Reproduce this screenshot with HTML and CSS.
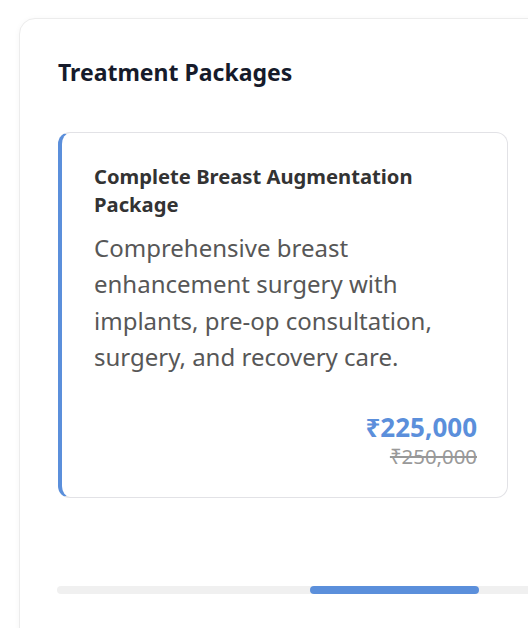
FILE: index.html
```html
<!DOCTYPE html>
<html lang="en">
<head>
<meta charset="utf-8">
<title>Treatment Packages</title>
<link rel="stylesheet" href="styles.css">
</head>
<body>
<section class="panel">
  <h2 class="panel-title">Treatment Packages</h2>
  <div class="carousel">
    <article class="package">
      <h3 class="package-title">Complete Breast Augmentation Package</h3>
      <p class="package-desc">Comprehensive breast enhancement surgery with implants, pre-op consultation, surgery, and recovery care.</p>
      <div class="package-price">
        <span class="price-now">₹225,000</span>
        <span class="price-old">₹250,000</span>
      </div>
    </article>
  </div>
  <div class="track"><div class="thumb"></div></div>
</section>
</body>
</html>
```
FILE: styles.css
```css
html, body {
  margin: 0;
  padding: 0;
  background: #ffffff;
  overflow: hidden;
  font-family: "Noto Sans", "Open Sans", sans-serif;
}
body {
  width: 528px;
  height: 628px;
}
.panel {
  box-sizing: border-box;
  margin: 18px 0 0 19px;
  width: 600px;
  height: 640px;
  padding: 37px 38px 0 38px;
  border: 1px solid #ececec;
  border-radius: 16px;
  background: #ffffff;
  box-shadow: 0 1px 6px rgba(0, 0, 0, 0.04);
}
.panel-title {
  margin: 0;
  font-size: 23px;
  line-height: 32px;
  font-weight: 700;
  color: #161b2b;
}
.carousel {
  display: flex;
  margin-top: 44px;
}
.package {
  box-sizing: border-box;
  width: 450px;
  flex: none;
  padding: 29px 30px 28px 32px;
  border: 1px solid #e2e2e6;
  border-left: 4px solid #5b8fdb;
  border-radius: 12px;
  background: #fff;
}
.package-title {
  margin: 0;
  font-size: 20.2px;
  line-height: 28px;
  font-weight: 700;
  color: #333333;
}
.package-desc {
  margin: 12px 0 0 0;
  font-size: 24px;
  line-height: 36.4px;
  color: #575757;
}
.package-price {
  display: flex;
  flex-direction: column;
  align-items: flex-end;
  margin-top: 35px;
}
.price-now {
  font-size: 26px;
  line-height: 32px;
  font-weight: 700;
  color: #5b8fdb;
}
.price-old {
  font-size: 20.4px;
  line-height: 26px;
  color: #999999;
  text-decoration: line-through;
}
.track {
  position: relative;
  margin-top: 88px;
  height: 8px;
  border-radius: 4px;
  background: #f0f0f0;
  margin-left: -1px;
}
.thumb {
  position: absolute;
  left: 253px;
  top: 0;
  width: 169px;
  height: 8px;
  border-radius: 4px;
  background: #5b8fdb;
}
```
